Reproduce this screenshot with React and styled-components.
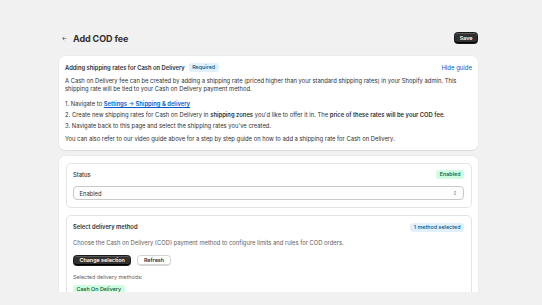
import React from "react";
import styled, { createGlobalStyle } from "styled-components";

const GlobalStyle = createGlobalStyle`
  html, body {
    margin: 0;
    padding: 0;
    background: #f1f1f1;
  }
  body {
    font-family: Inter, "Noto Sans", sans-serif;
    color: #303030;
    -webkit-font-smoothing: antialiased;
  }
`;

const Frame = styled.div`
  height: 292px;
  overflow: hidden;
  background: #f1f1f1;
`;

const Page = styled.div`
  width: 419px;
  margin-left: 59px;
  padding-top: 32px;
  display: flex;
  flex-direction: column;
  gap: 6.5px;
`;

const Header = styled.div`
  display: flex;
  align-items: center;
  justify-content: space-between;
  height: 12px;
  margin-bottom: 5.5px;
`;

const TitleGroup = styled.div`
  display: flex;
  align-items: center;
  gap: 5px;
  padding-left: 2px;
`;

const BackButton = styled.button`
  border: 0;
  background: none;
  padding: 0;
  display: flex;
  align-items: center;
  color: #4a4a4a;
  cursor: pointer;
`;

const Title = styled.h1`
  margin: 0;
  font-size: 9px;
  font-weight: 700;
  letter-spacing: -0.1px;
  color: #303030;
`;

const Button = styled.button`
  font-family: inherit;
  font-size: 5.4px;
  font-weight: 600;
  height: 11.7px;
  padding: 0 ${({ $pad }) => $pad || "5.5px"};
  border-radius: 3.5px;
  cursor: pointer;
  background: ${({ $primary }) => ($primary ? "#303030" : "#fff")};
  color: ${({ $primary }) => ($primary ? "#fff" : "#303030")};
  border: ${({ $primary }) => ($primary ? "0.5px solid #1a1a1a" : "0.5px solid #d4d4d4")};
  box-shadow: ${({ $primary }) =>
    $primary
      ? "inset 0 -1px 0 #000, inset 0 1px 0 rgba(255,255,255,0.2)"
      : "inset 0 -1px 0 #d8d8d8"};
`;

const Card = styled.div`
  background: #fff;
  border-radius: 6px;
  box-shadow: 0 1px 0 rgba(26, 26, 26, 0.07), 0 0 0 0.5px rgba(26, 26, 26, 0.05);
  padding: ${({ $pad }) => $pad || "6.5px 6px 6.5px"};
  display: flex;
  flex-direction: column;
`;

const InnerCard = styled.div`
  border: 0.5px solid #e3e3e3;
  border-radius: 5px;
  padding: 5.8px 6.5px 6.2px;
  display: flex;
  flex-direction: column;
`;

const CardHead = styled.div`
  display: flex;
  align-items: center;
  justify-content: space-between;
  height: 10px;
`;

const HeadLeft = styled.div`
  display: flex;
  align-items: center;
  gap: 4px;
`;

const Heading = styled.h2`
  margin: 0;
  font-size: 5.8px;
  line-height: 10px;
  font-weight: ${({ $regular }) => ($regular ? 450 : 600)};
  color: #303030;
`;

const Badge = styled.span`
  display: inline-flex;
  align-items: center;
  height: 9px;
  padding: 0 3.5px;
  border-radius: 3px;
  font-size: 5.4px;
  line-height: 9px;
  font-weight: 500;
  background: ${({ $tone }) => ($tone === "success" ? "#cdfee1" : "#e0f0ff")};
  color: ${({ $tone }) => ($tone === "success" ? "#0c5132" : "#00527c")};
`;

const Link = styled.a`
  color: #005bd3;
  font-size: 6px;
  text-decoration: none;
  cursor: pointer;
`;

const Text = styled.p`
  margin: ${({ $m }) => $m || "0"};
  font-size: ${({ $size }) => $size || "5.85px"};
  line-height: 8.6px;
  color: ${({ $subdued }) => ($subdued ? "#616161" : "#303030")};

  & b {
    font-weight: 600;
  }
`;

const StepList = styled.ol`
  margin: 5.5px 0 0;
  padding: 0;
  list-style: none;
  display: flex;
  flex-direction: column;
`;

const Step = styled.li`
  font-size: 5.85px;
  line-height: 10.8px;
  color: #303030;

  & b {
    font-weight: 600;
  }

  & a {
    color: #005bd3;
    font-weight: 600;
    text-decoration: underline;
  }
`;

const Stack = styled.div`
  display: flex;
  flex-direction: column;
  gap: 7.6px;
`;

const SelectBox = styled.div`
  margin-top: 6.7px;
  height: 14px;
  box-sizing: border-box;
  border: 0.5px solid #c9c9c9;
  border-radius: 4px;
  background: #fdfdfd;
  display: flex;
  align-items: center;
  justify-content: space-between;
  padding: 0 5px 0 5.5px;
  font-size: 5.8px;
  color: #303030;
`;

const ButtonRow = styled.div`
  display: flex;
  gap: 6px;
  margin-top: 6.7px;
`;

const BadgeRow = styled.div`
  display: flex;
  margin-top: 3.2px;
  min-height: 30px;
`;

const Arrow = () => (
  <svg width="7" height="7" viewBox="0 0 20 20" fill="currentColor">
    <path d="M16 10a.75.75 0 0 1-.75.75H6.56l3.22 3.22a.75.75 0 1 1-1.06 1.06l-4.5-4.5a.75.75 0 0 1 0-1.06l4.5-4.5a.75.75 0 0 1 1.06 1.06L6.56 9.25h8.69A.75.75 0 0 1 16 10Z" />
  </svg>
);

const Chevrons = () => (
  <svg width="6" height="6" viewBox="0 0 20 20" fill="#6b6b6b">
    <path d="M10.884 4.323a1.25 1.25 0 0 0-1.768 0l-2.646 2.647a.75.75 0 0 0 1.06 1.06l2.47-2.47 2.47 2.47a.75.75 0 1 0 1.06-1.06l-2.646-2.647Z" />
    <path d="m13.53 13.03-2.646 2.647a1.25 1.25 0 0 1-1.768 0l-2.646-2.647a.75.75 0 0 1 1.06-1.06l2.47 2.47 2.47-2.47a.75.75 0 0 1 1.06 1.06Z" />
  </svg>
);

export default function App() {
  return (
    <Frame>
      <GlobalStyle />
      <Page>
        <Header>
          <TitleGroup>
            <BackButton aria-label="Back">
              <Arrow />
            </BackButton>
            <Title>Add COD fee</Title>
          </TitleGroup>
          <Button $primary $pad="4.5px">Save</Button>
        </Header>

        <Card>
          <CardHead>
            <HeadLeft>
              <Heading>Adding shipping rates for Cash on Delivery</Heading>
              <Badge>Required</Badge>
            </HeadLeft>
            <Link>Hide guide</Link>
          </CardHead>
          <Text $m="4px 0 0">
            A Cash on Delivery fee can be created by adding a shipping rate (priced higher than your standard
            shipping rates) in your Shopify admin. This shipping rate will be tied to your Cash on Delivery payment
            method.
          </Text>
          <StepList>
            <Step>
              1. Navigate to <a>Settings → Shipping &amp; delivery</a>
            </Step>
            <Step>
              2. Create new shipping rates for Cash on Delivery in <b>shipping zones</b> you'd like to offer it in.
              The <b>price of these rates will be your COD fee</b>.
            </Step>
            <Step>3. Navigate back to this page and select the shipping rates you've created.</Step>
          </StepList>
          <Text $m="3px 0 0">
            You can also refer to our video guide above for a step by step guide on how to add a shipping rate for
            Cash on Delivery.
          </Text>
        </Card>

        <Card $pad="6.8px 6.5px">
          <Stack>
            <InnerCard>
              <CardHead>
                <Heading $regular>Status</Heading>
                <Badge $tone="success">Enabled</Badge>
              </CardHead>
              <SelectBox>
                <span>Enabled</span>
                <Chevrons />
              </SelectBox>
            </InnerCard>

            <InnerCard>
              <CardHead>
                <Heading>Select delivery method</Heading>
                <Badge>1 method selected</Badge>
              </CardHead>
              <Text $subdued $m="7.2px 0 0">
                Choose the Cash on Delivery (COD) payment method to configure limits and rules for COD orders.
              </Text>
              <ButtonRow>
                <Button $primary>Change selection</Button>
                <Button>Refresh</Button>
              </ButtonRow>
              <Text $subdued $size="5.4px" $m="7px 0 0">
                Selected delivery methods:
              </Text>
              <BadgeRow>
                <Badge $tone="success">Cash On Delivery</Badge>
              </BadgeRow>
            </InnerCard>
          </Stack>
        </Card>
      </Page>
    </Frame>
  );
}
